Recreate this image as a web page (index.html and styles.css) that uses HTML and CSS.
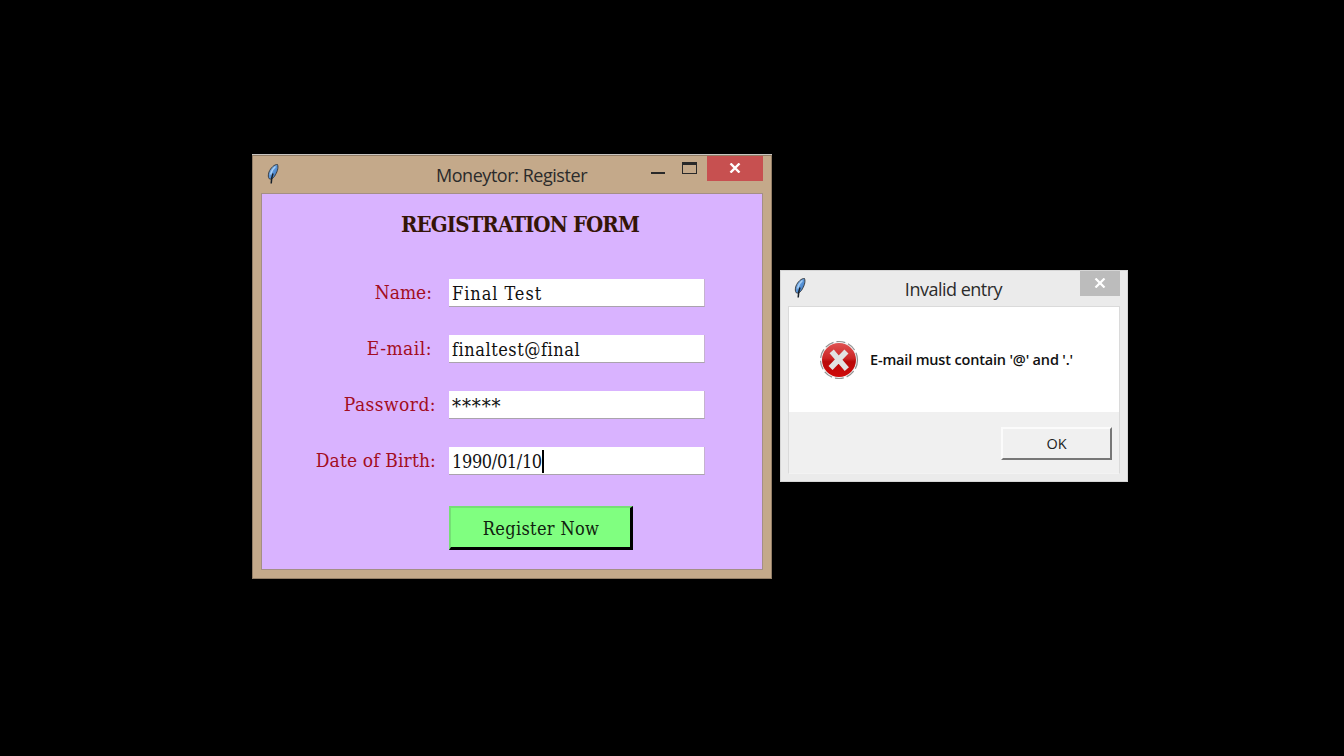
FILE: index.html
```html
<!DOCTYPE html>
<html lang="en">
<head>
<meta charset="utf-8">
<title>Moneytor: Register</title>
<link rel="stylesheet" href="styles.css">
</head>
<body>
<svg width="0" height="0" class="defs">
  <defs>
    <linearGradient id="blue" x1="0" y1="0" x2="1" y2="1"><stop offset="0" stop-color="#9bc4ee"/><stop offset=".5" stop-color="#5a95d8"/><stop offset="1" stop-color="#2f6bb8"/></linearGradient>
    <linearGradient id="red" x1="0" y1="0" x2="0" y2="1"><stop offset="0" stop-color="#df5353"/><stop offset=".45" stop-color="#cc2525"/><stop offset=".55" stop-color="#b90808"/><stop offset="1" stop-color="#d00b0b"/></linearGradient>
    <symbol id="feather" viewBox="0 0 14 22">
      <path d="M11.500 1.500C8.500 1.200 4.500 5 3 9c-1 3-.9 5.500.3 6.800 1.600.8 3.600-.2 5.200-2.500C11 9.500 12.800 5 11.500 1.500z" fill="url(#blue)" stroke="#3a3f45" stroke-width="1"/>
      <path d="M7 10.500C6 13 5.300 15 5.200 20.500" fill="none" stroke="#17202a" stroke-width="1.500"/>
      <path d="M9.500 3.500C7 5.500 5.300 8.500 4.600 11.500" fill="none" stroke="#a9d0f5" stroke-width="1.300"/>
    </symbol>
  </defs>
</svg>
<main class="desktop">
  <section class="window register">
    <header class="titlebar">
      <svg class="feather"><use href="#feather"/></svg>
      <h1 class="title">Moneytor: Register</h1>
      <div class="controls">
        <svg class="minmax" width="48" height="24" viewBox="0 0 48 24"><path d="M0 16h14v2H0zM31 6h15v12H31zM32 9v8h13V9z" fill="#292929" fill-rule="evenodd"/></svg>
        <div class="close"><svg width="12" height="10" viewBox="0 0 12 10"><path d="M1.500.500l9 9M10.500.500l-9 9" stroke="#fff" stroke-width="2.400"/></svg></div>
      </div>
    </header>
    <form class="form">
      <h2 class="heading">REGISTRATION FORM</h2>
      <div class="row"><label class="label short">Name:</label><div class="entry"><span class="v-name">Final Test</span></div></div>
      <div class="row"><label class="label short l-mail">E-mail:</label><div class="entry"><span class="v-mail">finaltest@final</span></div></div>
      <div class="row"><label class="label l-pass">Password:</label><div class="entry"><span class="v-pass">*****</span></div></div>
      <div class="row"><label class="label l-birth">Date of Birth:</label><div class="entry"><span class="v-date">1990/01/10</span><i class="caret"></i></div></div>
      <button class="submit" type="button">Register Now</button>
    </form>
  </section>
  <section class="window dialog">
    <header class="titlebar">
      <svg class="feather"><use href="#feather"/></svg>
      <h1 class="title">Invalid entry</h1>
      <div class="close"><svg width="12" height="10" viewBox="0 0 12 10"><path d="M1.500.500l9 9M10.500.500l-9 9" stroke="#fff" stroke-width="2.200"/></svg></div>
    </header>
    <div class="panel">
      <div class="message">
        <svg class="error" width="40" height="40" viewBox="0 0 40 40">
          <circle cx="20" cy="20" r="18.500" fill="#f3f3f3" stroke="#929292" stroke-width="1.200" stroke-dasharray="9 3"/>
          <circle cx="20" cy="20" r="17" fill="url(#red)"/>
          <path d="M14.500 13.500l11.500 13.500M25.500 13.500L13.500 26" stroke="#e2e2e2" stroke-width="5.600" stroke-linecap="square"/>
        </svg>
        <span class="text">E-mail must contain '@' and '.'</span>
      </div>
      <footer class="actions"><button class="ok" type="button">OK</button></footer>
    </div>
  </section>
</main>
</body>
</html>
```
FILE: styles.css
```css
* { box-sizing: border-box; }
body { margin: 0; background: #000; }
.defs { position: absolute; }
.desktop { position: relative; width: 1344px; height: 756px; overflow: hidden; background: #000; }
.window { position: absolute; }
.titlebar { display: flex; justify-content: space-between; align-items: flex-start; position: relative; }
.title { position: absolute; left: 0; right: 0; margin: 0; text-align: center; font: 400 18px/24px "Open Sans", "Noto Sans", sans-serif; color: #2b2b2b; white-space: nowrap; }
.feather { width: 14px; height: 22px; }
.close { display: flex; justify-content: center; align-items: center; height: 25px; padding-bottom: 2px; }

.register { left: 252px; top: 154px; width: 520px; height: 425px; background: #c4a98a; border: 1px solid #927d66; border-top: 2px solid #927d66; padding: 0 8px 8px; }
.register::before { content: ""; position: absolute; left: -1px; right: -1px; top: -2px; height: 1px; background: #c9c5c1; }
.register .titlebar { height: 37px; }
.register .title { top: 7px; right: 1px; letter-spacing: -.45px; }
.register .feather { margin: 7px 0 0 5px; }
.controls { display: flex; position: relative; }
.minmax { margin-right: 8px; }
.register .close { width: 56px; background: #c75050; }
.form { height: 377px; margin: 0; padding: 14px 0 0; border: 1px solid #a48f85; background: #d9b3ff; font-family: "DejaVu Serif Condensed", "DejaVu Serif", serif; }
.heading { margin: 0 0 39px; padding-left: 16px; height: 32px; text-align: center; font: bold 22px/32px "DejaVu Serif Condensed", "DejaVu Serif", serif; letter-spacing: -.9px; color: #351507; }
.row { display: flex; height: 28px; margin-bottom: 28px; }
.label { width: 174px; margin-right: 13px; text-align: right; font-size: 19px; line-height: 26px; color: #a30d22; white-space: nowrap; }
.label.short { padding-right: 4px; }
.l-mail { letter-spacing: .5px; }
.l-pass { letter-spacing: .45px; }
.l-birth { letter-spacing: .15px; }
.entry { display: flex; width: 256px; height: 28px; padding-left: 3px; background: #fff; border-right: 1px solid #c5b2cf; border-bottom: 1px solid #aaa3ad; font-size: 18px; line-height: 30px; color: #111; white-space: nowrap; }
.v-name { letter-spacing: .95px; }
.v-mail { letter-spacing: .55px; }
.v-pass { font-size: 20px; letter-spacing: .9px; }
.v-date { letter-spacing: -.35px; }
.caret { width: 2px; height: 23px; margin-top: 3px; background: #000; }
.submit { display: block; width: 184px; height: 44px; margin: 34px 0 0 187px; margin-top: 6px; padding: 3px 0 0 1px; border: 3px solid #000; border-top: 2px solid #75df75; border-left: 2px solid #75df75; background: #80ff80; font: 18px/36px "DejaVu Serif Condensed", "DejaVu Serif", serif; letter-spacing: .35px; color: #10230f; }
.row:nth-of-type(4) { margin-bottom: 31px; }
.row + .submit { margin-top: 0; }

.dialog { left: 780px; top: 270px; width: 348px; height: 212px; padding: 0 7px 7px; background: #ebebeb; border: 1px solid #d5d5d5; }
.dialog .titlebar { height: 35px; }
.dialog .title { top: 6px; right: 1px; letter-spacing: -.5px; }
.dialog .feather { margin: 6px 0 0 5px; }
.dialog .close { width: 40px; background: #bcbcbc; }
.panel { height: 168px; border: 1px solid #dadada; border-bottom: 1px solid #f3f3f3; background: #f0f0f0; }
.message { display: flex; align-items: center; height: 105px; padding-left: 30px; background: #fff; }
.text { margin-left: 11px; font: 600 14.5px/20px "Open Sans", "Noto Sans", sans-serif; letter-spacing: -.17px; color: #111; white-space: nowrap; }
.actions { display: flex; justify-content: flex-end; padding: 15px 7px 0; }
.ok { width: 111px; height: 33px; padding: 0; border: 2px solid #fbfbfb; border-right: 2px solid #777; border-bottom: 2px solid #777; background: #f0f0f0; font: 14.5px/28px "Open Sans", "Noto Sans", sans-serif; color: #222; }
```
